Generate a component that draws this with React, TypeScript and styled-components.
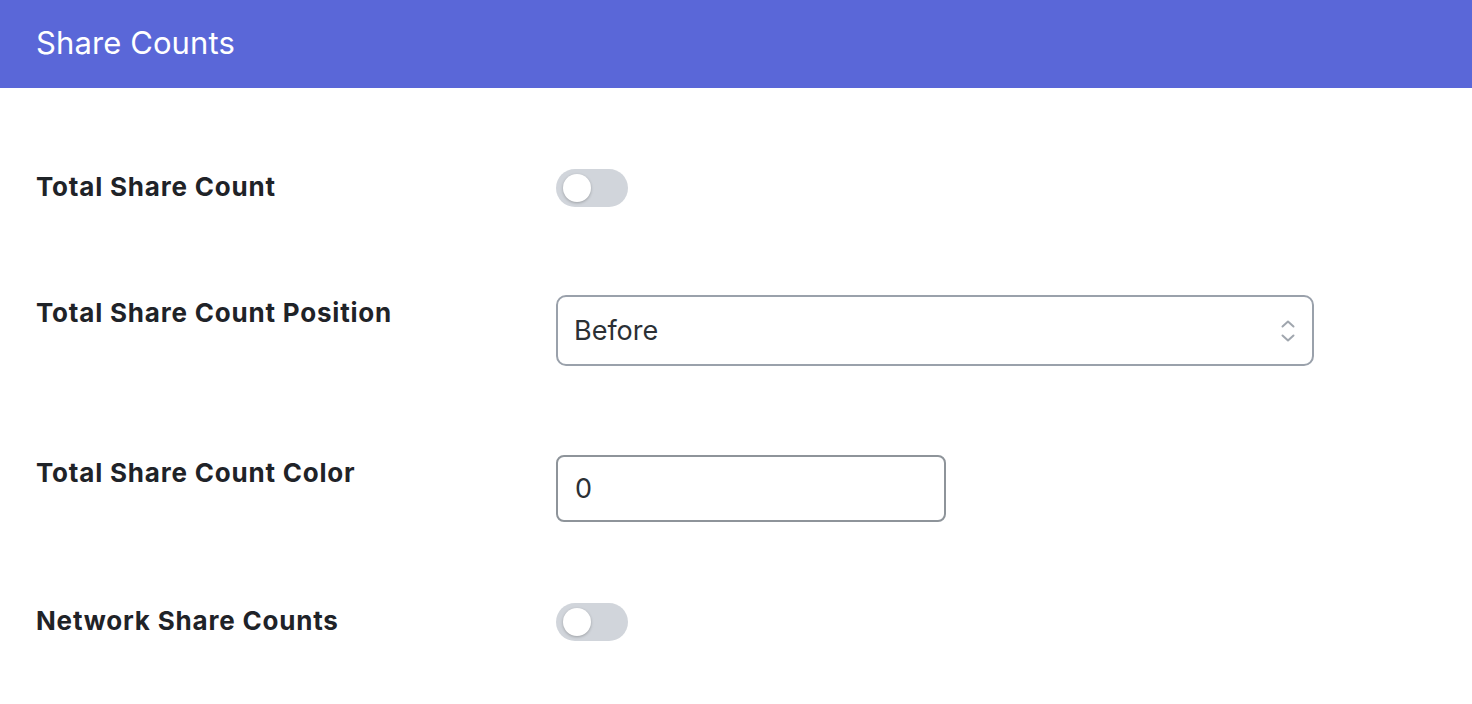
import React from "react";
import styled, { createGlobalStyle } from "styled-components";

const Global = createGlobalStyle`
  html, body { margin: 0; padding: 0; background: #ffffff; }
  body { font-family: Inter, "Noto Sans", "Liberation Sans", sans-serif; color: #1f2328; }
`;

const Page = styled.div`
  width: 1472px;
  min-height: 704px;
  background: #ffffff;
`;

const Header = styled.header`
  height: 88px;
  background: #5a67d8;
  display: flex;
  align-items: center;
  padding: 0 36px 3px 36px;
  box-sizing: border-box;
`;

const Title = styled.h1`
  margin: 0;
  font-size: 31px;
  font-weight: 400;
  color: #ffffff;
  letter-spacing: 0.1px;
`;

const Body = styled.div`
  padding: 81px 36px 0 36px;
  display: flex;
  flex-direction: column;
`;

const Row = styled.div<{ $pb: number }>`
  display: grid;
  grid-template-columns: 520px 1fr;
  align-items: start;
  padding-bottom: ${(p) => p.$pb}px;
`;

const Label = styled.label`
  font-size: 26px;
  font-weight: 700;
  line-height: 36px;
  letter-spacing: 0.8px;
  color: #1f2328;
`;

const Track = styled.div`
  position: relative;
  width: 72px;
  height: 38px;
  border-radius: 19px;
  background: #d1d5db;
`;

const Knob = styled.span`
  position: absolute;
  left: 7px;
  top: 5px;
  width: 28px;
  height: 28px;
  border-radius: 50%;
  background: #ffffff;
  box-shadow: 0 1px 3px rgba(0, 0, 0, 0.25);
`;

const SelectBox = styled.div`
  width: 758px;
  height: 71px;
  box-sizing: border-box;
  border: 2px solid #9aa1ab;
  border-radius: 10px;
  display: flex;
  align-items: center;
  justify-content: space-between;
  padding: 0 16px 0 16px;
`;

const FieldText = styled.span`
  font-size: 27px;
  color: #2b3035;
`;

const InputBox = styled.div`
  width: 390px;
  height: 67px;
  box-sizing: border-box;
  border: 2px solid #8e949a;
  border-radius: 8px;
  display: flex;
  align-items: center;
  padding: 0 17px;
`;

const Toggle = () => (
  <Track>
    <Knob />
  </Track>
);

const Chevrons = () => (
  <svg width="16" height="26" viewBox="0 0 16 26" fill="none">
    <path d="M2.5 8.5 L8 3.5 L13.5 8.5" stroke="#a0a6ae" strokeWidth="2" strokeLinecap="round" strokeLinejoin="round" />
    <path d="M2.5 17.5 L8 22.5 L13.5 17.5" stroke="#a0a6ae" strokeWidth="2" strokeLinecap="round" strokeLinejoin="round" />
  </svg>
);

export default function App() {
  return (
    <Page>
      <Global />
      <Header>
        <Title>Share Counts</Title>
      </Header>
      <Body>
        <Row $pb={88}>
          <Label>Total Share Count</Label>
          <Toggle />
        </Row>
        <Row $pb={89}>
          <Label>Total Share Count Position</Label>
          <SelectBox>
            <FieldText>Before</FieldText>
            <Chevrons />
          </SelectBox>
        </Row>
        <Row $pb={81}>
          <Label>Total Share Count Color</Label>
          <InputBox>
            <FieldText>0</FieldText>
          </InputBox>
        </Row>
        <Row $pb={0}>
          <Label>Network Share Counts</Label>
          <Toggle />
        </Row>
      </Body>
    </Page>
  );
}
